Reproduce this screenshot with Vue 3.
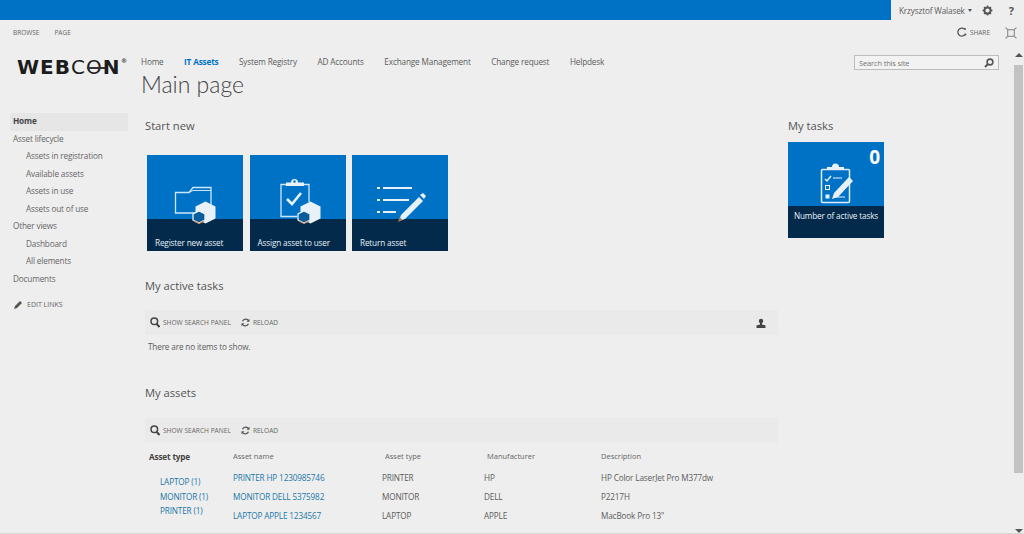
<template>
  <div class="page">
    <div class="topbar">
      <div class="topbar-blue"></div>
      <div class="topbar-user">
        <span class="user-name">Krzysztof Walasek</span>
        <span class="caret"></span>
        <svg class="gear" width="11" height="11" viewBox="0 0 12 12">
          <circle cx="6" cy="6" r="3.4" fill="none" stroke="#555" stroke-width="2.2" />
          <path d="M6 .6v2M6 9.4v2M.6 6h2M9.4 6h2M2.2 2.2l1.4 1.4M8.4 8.4l1.4 1.4M2.2 9.8l1.4-1.4M8.4 3.6l1.4-1.4" stroke="#555" stroke-width="1.5" />
        </svg>
        <span class="help">?</span>
      </div>
    </div>

    <div class="ribbon">
      <span>BROWSE</span>
      <span>PAGE</span>
      <div class="ribbon-right">
        <svg width="11" height="11" viewBox="0 0 11 11" fill="none" stroke="#555" stroke-width="1.3">
          <path d="M8.6 2.2A4 4 0 1 0 9.4 7" />
          <circle cx="9" cy="2" r="1" fill="#555" stroke="none" />
          <circle cx="9.4" cy="7.4" r="1" fill="#555" stroke="none" />
        </svg>
        <span>SHARE</span>
        <svg class="focus" width="12" height="12" viewBox="0 0 11 11" fill="none" stroke="#888" stroke-width="1">
          <rect x="2.5" y="2.5" width="6" height="6" />
          <path d="M.5.5l2 2M10.500.5l-2 2M.5 10.500l2-2M10.500 10.500l-2-2" />
        </svg>
      </div>
    </div>

    <div class="body">
      <aside class="sidebar">
        <div class="logo">
          <span class="logo-text"><b>WEB</b>CO<b>N</b></span><span class="logo-mark">®</span>
          <span class="logo-line"></span>
        </div>
        <ul class="quicklaunch">
          <li
            v-for="item in sideNav"
            :key="item.label"
            :class="{ selected: item.selected, sub: item.sub }"
          >
            {{ item.label }}
          </li>
        </ul>
        <div class="edit-links">
          <svg width="9" height="9" viewBox="0 0 9 9">
            <path d="M0 9l1-3 5-5 2 2-5 5z" fill="#555" />
          </svg>
          EDIT LINKS
        </div>
      </aside>

      <main class="main">
        <div class="header-row">
          <div class="titles">
            <nav class="topnav">
              <a
                v-for="link in topLinks"
                :key="link"
                :class="{ active: link === 'IT Assets' }"
              >{{ link }}</a>
            </nav>
            <h1 class="page-title">Main page</h1>
          </div>
          <div class="search">
            <span>Search this site</span>
            <svg width="10" height="10" viewBox="0 0 10 10" fill="none" stroke="#555" stroke-width="1.6">
              <circle cx="6" cy="4" r="2.9" />
              <path d="M4 6L1 9" stroke-width="2" />
            </svg>
          </div>
        </div>

        <div class="columns">
          <div class="col-left">
            <h2 class="section-title first">Start new</h2>
            <div class="tiles">
              <div v-for="tile in tiles" :key="tile.label" class="tile">
                <svg class="tile-icon" width="96" height="96" viewBox="0 0 96 96">
                  <template v-if="tile.icon === 'folder'">
                    <path d="M52 58H28.500V37.500h13.500l4-5h18V50" fill="none" stroke="#cfe6f7" stroke-width="1.300" />
                    <path d="M42 37.500l4-2h18" fill="none" stroke="#cfe6f7" stroke-width="1" />
                    <path d="M58.500 46.500l10 5v12l-10 5-10-5v-12z" fill="#e8f1f8" />
                    <path d="M52 56l6 3v6l-6 3-6-3v-6z" fill="#0b5c9c" stroke="#e8f1f8" stroke-width="1.300" />
                    <path d="M46.500 65l5.500 3 5.500-3-1 2-4.500 2-4.500-2z" fill="#c98a62" />
                  </template>
                  <template v-else-if="tile.icon === 'clipboard'">
                    <path d="M47 61.500H31V29.500h28V47" fill="none" stroke="#cfe6f7" stroke-width="1.300" />
                    <path d="M36 31v-3.500h5a3.500 3.500 0 0 1 7 0h6v3.500z" fill="#e8f1f8" />
                    <circle cx="44.500" cy="26.500" r="1.200" fill="#0072c6" />
                    <path d="M37 44l5 5 9-11" fill="none" stroke="#e8f1f8" stroke-width="2.600" />
                    <path d="M60.500 46.500l10 5v12l-10 5-10-5v-12z" fill="#e8f1f8" />
                    <path d="M54 56l6 3v6l-6 3-6-3v-6z" fill="#0b5c9c" stroke="#e8f1f8" stroke-width="1.300" />
                    <path d="M48.500 65l5.500 3 5.500-3-1 2-4.500 2-4.500-2z" fill="#c98a62" />
                  </template>
                  <template v-else>
                    <path d="M25 33h3M31 33h29M25 45h3M31 45h26M25 57h3M31 57h13" stroke="#e8f1f8" stroke-width="2" fill="none" />
                    <path d="M68 40l3-2 3 3-2 3z" fill="#e8f1f8" />
                    <path d="M67 42l4 4-18 18-6 2 2-6z" fill="#e8f1f8" />
                    <path d="M46 67l1.500-5 3 3z" fill="#9b7a62" />
                  </template>
                </svg>
                <span class="tile-label">{{ tile.label }}</span>
              </div>
            </div>

            <h2 class="section-title active-tasks">My active tasks</h2>
            <div class="toolbar">
              <svg class="tool-search" width="10" height="11" viewBox="0 0 10 11" fill="none" stroke="#444" stroke-width="1.500">
                <circle cx="4.300" cy="4.300" r="3.300" />
                <path d="M6.500 6.800L9.500 10" stroke-width="2" />
              </svg>
              <span>SHOW SEARCH PANEL</span>
              <svg class="tool-reload" width="9" height="9" viewBox="0 0 9 9" fill="none" stroke="#555" stroke-width="1.300">
                <path d="M7.800 3A3.500 3.500 0 0 0 1.500 3.200M1.200 6a3.500 3.500 0 0 0 6.300-.2" />
                <path d="M8.500.8v3h-3zM.5 8.200v-3h3z" fill="#555" stroke="none" />
              </svg>
              <span>RELOAD</span>
              <svg class="tool-user" width="10" height="10" viewBox="0 0 10 10">
                <circle cx="5" cy="3" r="2.200" fill="#444" />
                <path d="M4 4.500h2v2l3.500 1V10H.5V7.500l3.500-1z" fill="#444" />
              </svg>
            </div>
            <p class="empty">There are no items to show.</p>

            <h2 class="section-title assets">My assets</h2>
            <div class="toolbar">
              <svg class="tool-search" width="10" height="11" viewBox="0 0 10 11" fill="none" stroke="#444" stroke-width="1.500">
                <circle cx="4.300" cy="4.300" r="3.300" />
                <path d="M6.500 6.800L9.500 10" stroke-width="2" />
              </svg>
              <span>SHOW SEARCH PANEL</span>
              <svg class="tool-reload" width="9" height="9" viewBox="0 0 9 9" fill="none" stroke="#555" stroke-width="1.300">
                <path d="M7.800 3A3.500 3.500 0 0 0 1.500 3.200M1.200 6a3.500 3.500 0 0 0 6.300-.2" />
                <path d="M8.500 .8v3h-3zM.5 8.200v-3h3z" fill="#555" stroke="none" />
              </svg>
              <span>RELOAD</span>
            </div>

            <div class="assets-view">
              <div class="facets">
                <div class="facet-title">Asset type</div>
                <a v-for="f in facets" :key="f">{{ f }}</a>
              </div>
              <div class="asset-table">
                <div class="cell head name-col">Asset name</div>
                <div class="cell head type-col">Asset type</div>
                <div class="cell head maker-col">Manufacturer</div>
                <div class="cell head">Description</div>
                <template v-for="row in assets" :key="row.name">
                  <a class="cell link">{{ row.name }}</a>
                  <div class="cell">{{ row.type }}</div>
                  <div class="cell">{{ row.maker }}</div>
                  <div class="cell">{{ row.desc }}</div>
                </template>
              </div>
            </div>
          </div>

          <div class="col-right">
            <h2 class="section-title first">My tasks</h2>
            <div class="tile task-tile">
              <svg class="tile-icon" width="96" height="96" viewBox="0 0 96 96">
                <rect x="33.500" y="27.500" width="28" height="33" rx="1" fill="none" stroke="#dcecf8" stroke-width="1.500" />
                <path d="M39 28v-3h5a3.500 3.500 0 0 1 7 0h5v3z" fill="#e8f1f8" />
                <path d="M37 37l2 2 4-5" fill="none" stroke="#e8f1f8" stroke-width="1.500" />
                <rect x="37.500" y="43.500" width="4" height="4" fill="none" stroke="#e8f1f8" />
                <rect x="37.500" y="52.500" width="4" height="4" fill="#e8f1f8" />
                <path d="M45 36h9M45 55h12" stroke="#e8f1f8" />
                <path d="M61 35l4 4-15 16-6 2 2-6z" fill="#e8f1f8" />
              </svg>
              <span class="task-count">0</span>
              <span class="tile-label center">Number of active tasks</span>
            </div>
          </div>
        </div>
      </main>

      <div class="scrollbar">
        <span class="arrow up"></span>
        <div class="thumb"></div>
        <div class="track"></div>
        <span class="arrow down"></span>
      </div>
    </div>
  </div>
</template>

<script setup>
const sideNav = [
  { label: "Home", selected: true },
  { label: "Asset lifecycle" },
  { label: "Assets in registration", sub: true },
  { label: "Available assets", sub: true },
  { label: "Assets in use", sub: true },
  { label: "Assets out of use", sub: true },
  { label: "Other views" },
  { label: "Dashboard", sub: true },
  { label: "All elements", sub: true },
  { label: "Documents" },
];

const topLinks = [
  "Home",
  "IT Assets",
  "System Registry",
  "AD Accounts",
  "Exchange Management",
  "Change request",
  "Helpdesk",
];

const tiles = [
  { label: "Register new asset", icon: "folder" },
  { label: "Assign asset to user", icon: "clipboard" },
  { label: "Return asset", icon: "list" },
];

const facets = ["LAPTOP (1)", "MONITOR (1)", "PRINTER (1)"];

const assets = [
  { name: "PRINTER HP 1230985746", type: "PRINTER", maker: "HP", desc: "HP Color LaserJet Pro M377dw" },
  { name: "MONITOR DELL 5375982", type: "MONITOR", maker: "DELL", desc: "P2217H" },
  { name: "LAPTOP APPLE 1234567", type: "LAPTOP", maker: "APPLE", desc: 'MacBook Pro 13"' },
];
</script>

<style>
html,
body {
  margin: 0;
  background: #eeeeee;
}
</style>

<style scoped>
.page {
  width: 1024px;
  height: 534px;
  overflow: hidden;
  box-sizing: border-box;
  border-bottom: 1px solid #d8d8d8;
  display: flex;
  flex-direction: column;
  background: #eeeeee;
  font-family: "Open Sans", "Liberation Sans", sans-serif;
  font-size: 8.2px;
  letter-spacing: -0.15px;
  color: #5c5c5c;
}

.topbar {
  height: 20px;
  display: flex;
  flex: none;
}
.topbar-blue {
  width: 891px;
  background: #0072c6;
}
.topbar-user {
  flex: 1;
  display: flex;
  align-items: center;
  padding-left: 8px;
  color: #5c5c5c;
}
.caret {
  margin-left: 3px;
  border: 2px solid transparent;
  border-top: 3px solid #555;
  margin-top: 3px;
}
.gear {
  margin-left: 10px;
}
.help {
  margin-left: 16px;
  font-size: 11px;
  font-weight: 700;
  color: #555;
}

.ribbon {
  height: 24px;
  flex: none;
  display: flex;
  align-items: center;
  gap: 15px;
  padding: 1px 7px 0 13px;
  box-sizing: border-box;
  font-size: 6.5px;
  letter-spacing: 0;
  color: #666;
}
.ribbon-right {
  margin-left: auto;
  display: flex;
  align-items: center;
  gap: 3px;
}
.focus {
  margin-left: 12px;
}

.body {
  flex: 1;
  min-height: 0;
  display: flex;
}

.sidebar {
  width: 141px;
  flex: none;
}
.logo {
  position: relative;
  padding: 10px 0 0 17px;
  height: 49px;
  box-sizing: border-box;
  display: flex;
  align-items: flex-start;
  color: #1c1c1c;
}
.logo-text {
  font-family: "DejaVu Sans", sans-serif;
  font-weight: 400;
  font-size: 20px;
  line-height: 26px;
  letter-spacing: 1px;
}
.logo-mark {
  font-size: 6px;
  margin: 3px 0 0 1px;
  font-weight: 700;
}
.logo-line {
  position: absolute;
  left: 87px;
  top: 23px;
  width: 18px;
  height: 2px;
  background: #333;
}
.quicklaunch {
  list-style: none;
  margin: 20px 0 0;
  padding: 0;
}
.quicklaunch li {
  width: 115px;
  margin-left: 10px;
  padding-left: 3px;
  height: 17.5px;
  line-height: 15px;
  color: #666;
}
.quicklaunch li.sub {
  padding-left: 16px;
  width: 102px;
}
.quicklaunch li.selected {
  font-weight: 700;
  background: #e6e6e6;
  color: #444;
}
.edit-links {
  margin: 12px 0 0 14px;
  font-size: 7px;
  letter-spacing: 0;
  color: #666;
  display: flex;
  align-items: center;
  gap: 4px;
}

.main {
  flex: 1;
  min-width: 0;
}
.header-row {
  display: flex;
  justify-content: space-between;
  height: 74px;
}
.topnav {
  display: flex;
  gap: 20.5px;
  padding-top: 11px;
  line-height: 13px;
}
.topnav a.active {
  color: #0072c6;
  font-weight: 700;
}
.page-title {
  margin: 1px 0 0;
  font-family: Lato, "Open Sans", sans-serif;
  font-weight: 300;
  font-size: 23px;
  line-height: 30px;
  letter-spacing: 0;
  color: #444;
}
.search {
  width: 145px;
  height: 15px;
  margin: 11px 15px 0 0;
  box-sizing: border-box;
  border: 1px solid #bdbdbd;
  background: #f2f2f2;
  display: flex;
  align-items: center;
  justify-content: space-between;
  padding: 0 4px;
  font-size: 7.5px;
  color: #777;
}

.columns {
  display: flex;
  padding-left: 4px;
}
.col-left {
  width: 633px;
}
.col-right {
  margin-left: 10px;
}
.section-title {
  margin: 0;
  font-weight: 400;
  font-size: 11.2px;
  line-height: 16px;
  letter-spacing: 0;
  color: #555;
}
.active-tasks {
  margin-top: 27px;
}
.assets {
  margin-top: 32px;
}

.tiles {
  display: flex;
  gap: 6.5px;
  margin: 21px 0 0 2px;
}
.tile {
  width: 96px;
  height: 96px;
  display: grid;
  background: linear-gradient(#0072c6 64px, #03294b 64px);
  color: #e8f1f8;
}
.tile > * {
  grid-area: 1 / 1;
}
.tile-label {
  align-self: end;
  padding: 0 0 2px 8px;
  line-height: 12px;
}
.tile-label.center {
  padding: 0 0 16px;
  text-align: center;
}
.task-tile {
  margin-top: 8px;
}
.task-count {
  justify-self: end;
  padding-right: 4px;
  font-size: 19px;
  line-height: 30px;
  font-weight: 700;
  color: #fff;
}

.toolbar {
  height: 25px;
  margin-top: 16px;
  display: flex;
  align-items: center;
  background: #eaeaea;
  padding-left: 5px;
  font-size: 6.6px;
  letter-spacing: 0;
  color: #666;
}
.assets + .toolbar {
  margin-top: 17px;
}
.tool-search {
  margin-right: 3px;
}
.tool-reload {
  margin: 0 3px 0 10px;
}
.tool-user {
  margin-left: auto;
  margin-right: 12px;
}
.empty {
  margin: 5px 0 0 3px;
  line-height: 13px;
}

.assets-view {
  display: flex;
  margin-top: 7px;
}
.facets {
  width: 88px;
  flex: none;
  display: flex;
  flex-direction: column;
}
.facets a {
  margin-left: 15px;
  height: 14.5px;
  line-height: 14.5px;
  color: #2277a8;
}
.facets a:first-of-type {
  margin-top: 12px;
}
.facet-title {
  margin-left: 4px;
  font-weight: 700;
  line-height: 13px;
  color: #444;
}
.asset-table {
  display: grid;
  grid-template-columns: 149px 102px 117px 1fr;
  grid-template-rows: 18px repeat(3, 19px);
  line-height: 19px;
}
.cell.head {
  font-size: 7.5px;
  letter-spacing: 0;
  line-height: 13px;
  color: #666;
}
.type-col,
.maker-col {
  padding-left: 3px;
}
.link {
  color: #2277a8;
}

.scrollbar {
  width: 9px;
  margin-right: 1px;
  flex: none;
  display: flex;
  flex-direction: column;
  align-items: center;
  padding-top: 9px;
  box-sizing: border-box;
}
.arrow {
  border: 4px solid transparent;
  flex: none;
}
.arrow.up {
  border-bottom: 4px solid #555;
  border-top: 0;
}
.arrow.down {
  border-top: 4px solid #555;
  border-bottom: 0;
}
.thumb {
  width: 100%;
  height: 408px;
  margin-top: 8px;
  background: #c2c2c2;
}
.track {
  flex: 1;
}
</style>
